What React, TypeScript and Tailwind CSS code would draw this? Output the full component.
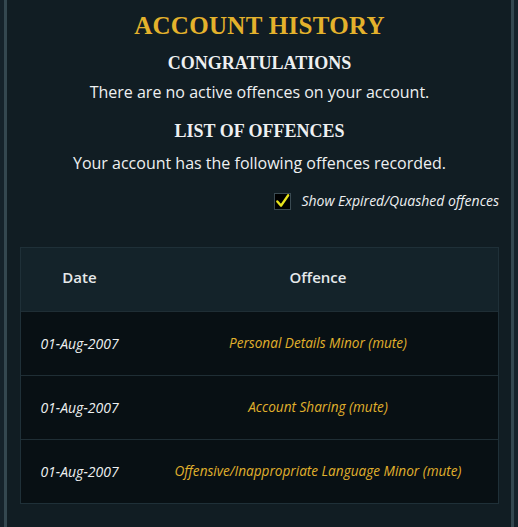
import React from 'react';

interface Offence {
  date:    string;
  offence: string;
}

const offences: Offence[] = [
  { date: '01-Aug-2007', offence: 'Personal Details Minor (mute)' },
  { date: '01-Aug-2007', offence: 'Account Sharing (mute)' },
  { date: '01-Aug-2007', offence: 'Offensive/Inappropriate Language Minor (mute)' },
];

const serif = "font-['Liberation_Serif',serif]";
const sans  = "font-['Open_Sans','Liberation_Sans',sans-serif]";

export default function App() {
  return (
    <div className="w-[518px] h-[527px] bg-[#15222a] pl-[4px] pr-[4px] overflow-hidden">
      <div className="h-full border-l-[3px] border-r-[3px] border-[#34474f] bg-[#111d23] pl-[13px] pr-[12px] pt-[9px]">
        {/* Title */}
        <h1 className={`${serif} text-center font-bold text-[#e4b22c] text-[25px] leading-[34px] tracking-[0.3px]`}>
          ACCOUNT HISTORY
        </h1>

        {/* Congratulations */}
        <h2 className={`${serif} text-center font-bold text-[#eef0f1] text-[18px] leading-[24px] mt-[8px]`}>
          CONGRATULATIONS
        </h2>
        <p className={`${sans} text-center text-[#eef0f1] text-[16px] leading-[22px] mt-[6px]`}>
          There are no active offences on your account.
        </p>

        {/* List of offences */}
        <h2 className={`${serif} text-center font-bold text-[#eef0f1] text-[18px] leading-[24px] mt-[16px]`}>
          LIST OF OFFENCES
        </h2>
        <p className={`${sans} text-center text-[#eef0f1] text-[16px] leading-[22px] mt-[9px]`}>
          Your account has the following offences recorded.
        </p>

        {/* Checkbox */}
        <div className="flex justify-end items-center gap-[10px] mt-[17px]">
          <span className="w-[17px] h-[17px] bg-black border border-[#3a4a52] flex items-center justify-center">
            <svg viewBox="0 0 16 16" className="w-[16px] h-[16px]">
              <path d="M2.5 8.5 L6.5 13 L14 2" fill="none" stroke="#e6e21c" strokeWidth="2.6" strokeLinecap="round" strokeLinejoin="round" />
            </svg>
          </span>
          <span className={`${sans} italic text-[#eef0f1] text-[14px] leading-[20px]`}>
            Show Expired/Quashed offences
          </span>
        </div>

        {/* Table */}
        <div className="mt-[36px] border border-[#1f3038]">
          <table className={`${sans} w-full border-collapse`}>
            <thead>
              <tr className="bg-[#14232a] h-[63px]">
                <th className="w-[117px] pb-[5px] text-center text-[#e6e9ea] font-semibold text-[15px]">Date</th>
                <th className="pb-[5px] text-center text-[#e6e9ea] font-semibold text-[15px]">Offence</th>
              </tr>
            </thead>
            <tbody>
              {offences.map((o, i) => (
                <tr key={i} className="bg-[#081014] h-[64px] border-t border-[#1f2e35]">
                  <td className="text-center italic text-[#eef0f1] text-[14px]">{o.date}</td>
                  <td className="text-center italic text-[#e1b12c] text-[13.6px]">{o.offence}</td>
                </tr>
              ))}
            </tbody>
          </table>
        </div>
      </div>
    </div>
  );
}
